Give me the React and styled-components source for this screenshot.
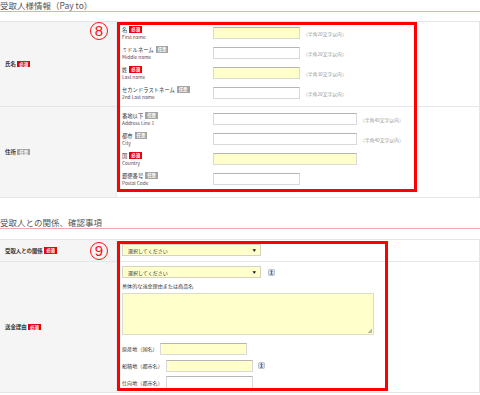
import React from 'react';
import styled, { createGlobalStyle } from 'styled-components';

const GlobalStyle = createGlobalStyle`
  html, body {
    margin: 0;
    padding: 0;
    background: #fff;
  }
  body {
    font-family: "Noto Sans CJK JP", "Noto Sans", sans-serif;
    color: #333;
  }
  * { box-sizing: border-box; }
`;

const Page = styled.div`
  width: 480px;
  height: 395px;
  overflow: hidden;
`;

const SectionTitle = styled.h2`
  margin: ${p => p.$top || 0}px 0 0;
  height: 12px;
  line-height: 11px;
  font-size: 8.5px;
  font-weight: normal;
  color: #555;
  border-bottom: 1px solid #f0a8a8;
`;

const Table = styled.div`
  position: relative;
  margin-top: ${p => p.$top}px;
  border-top: 1px solid #e6e6e6;
  border-right: 1px solid #e6e6e6;
`;

const Row = styled.div`
  display: grid;
  grid-template-columns: 117px 1fr;
  border-bottom: 1px solid #e6e6e6;
`;

const HeadCell = styled.div`
  display: flex;
  align-items: center;
  gap: 1.5px;
  padding-left: 5px;
  background: #f5f5f5;
  border-right: 1px solid #ececec;
  font-size: 5.4px;
  font-weight: bold;
  color: #333;
`;

const BodyCell = styled.div`
  padding: ${p => p.$pad};
`;

const Badge = styled.span`
  display: inline-block;
  height: 6.5px;
  line-height: 6.5px;
  padding: 0 2px;
  font-size: 4.4px;
  font-weight: bold;
  color: #fff;
  background: ${p => (p.$required ? '#e60012' : '#a3a3a3')};
`;

const Field = styled.div`
  display: flex;
  align-items: center;
  height: 20px;
`;

const FieldLabel = styled.div`
  width: 91px;
  flex: none;
`;

const LabelMain = styled.div`
  display: flex;
  align-items: center;
  gap: 2px;
  height: 7px;
  font-size: 5.3px;
  color: #333;
`;

const LabelSub = styled.div`
  height: 7px;
  line-height: 7px;
  font-size: 4.8px;
  color: #554455;
`;

const TextBox = styled.div`
  flex: none;
  width: ${p => p.$w}px;
  height: ${p => p.$h || 12}px;
  margin-left: ${p => p.$ml || 0}px;
  background: ${p => (p.$yellow ? '#ffffcc' : '#fff')};
  border: 1px solid #d9d9d9;
  border-top-color: #b5b5b5;
`;

const Note = styled.span`
  margin-left: 3px;
  font-size: 4.8px;
  color: #999;
`;

const RedFrame = styled.div`
  position: absolute;
  left: 117px;
  top: ${p => p.$top}px;
  width: ${p => p.$w}px;
  height: ${p => p.$h}px;
  border: 3px solid #ff0000;
  pointer-events: none;
`;

const CircleNo = styled.div`
  position: absolute;
  left: 90px;
  top: ${p => p.$top}px;
  width: 18px;
  height: 18px;
  border: 1px solid #ff1010;
  border-radius: 50%;
  color: #ff1010;
  font-family: "Liberation Sans", Arial, sans-serif;
  font-size: 15px;
  line-height: 16px;
  text-align: center;
`;

const Select = styled.div`
  display: flex;
  align-items: center;
  justify-content: space-between;
  width: 139px;
  height: 12px;
  padding: 0 4px 0 5px;
  background: #ffffcc;
  border: 1px solid #d4d4c0;
  font-size: 5px;
  color: #333;
  &::after {
    content: '▼';
    font-size: 3.5px;
    color: #111;
  }
`;

const Line = styled.div`
  display: flex;
  align-items: center;
  height: ${p => p.$h || 12}px;
  margin-top: ${p => p.$mt || 0}px;
`;

const SmallLabel = styled.div`
  margin-top: ${p => p.$mt || 0}px;
  height: 8px;
  line-height: 8px;
  font-size: 5.1px;
  color: #333;
`;

const InlineLabel = styled.span`
  font-size: 5.1px;
  color: #333;
  white-space: nowrap;
`;

const Memo = styled.div`
  position: relative;
  margin-top: 3px;
  width: 252px;
  height: 42px;
  background: #ffffcc;
  border: 1px solid #dcdcc8;
  &::after {
    content: '';
    position: absolute;
    right: 1px;
    bottom: 1px;
    width: 4px;
    height: 4px;
    background: linear-gradient(135deg, transparent 50%, #b8b8a8 50%);
  }
`;

const HelpIcon = ({ ml }) => (
  <svg width="7" height="7" viewBox="0 0 7 7" style={{ marginLeft: ml, flex: 'none' }}>
    <rect x="0.5" y="0.5" width="6" height="6" rx="1" fill="#d8dfea" stroke="#9aa6b8" strokeWidth="0.6" />
    <path d="M3.5 1.6 V5 M2.4 2.6 L3.5 1.6 L4.6 2.6 M2.2 5.3 H4.8" stroke="#2d4a7a" strokeWidth="0.7" fill="none" />
  </svg>
);

const nameFields = [
  { ja: '名', en: 'First name', req: true, note: '（半角20文字以内）' },
  { ja: 'ミドルネーム', en: 'Middle name', req: false, note: '（半角20文字以内）' },
  { ja: '姓', en: 'Last name', req: true, note: '（半角30文字以内）' },
  { ja: 'セカンドラストネーム', en: '2nd Last name', req: false, note: '（半角20文字以内）' },
];

const addressFields = [
  { ja: '番地以下', en: 'Address Line 1', req: false, w: 144, note: '（半角40文字以内）' },
  { ja: '都市', en: 'City', req: false, w: 144, note: '（半角40文字以内）' },
  { ja: '国', en: 'Country', req: true, w: 144 },
  { ja: '郵便番号', en: 'Postal Code', req: false, w: 87 },
];

const FormField = ({ ja, en, req, w = 87, note }) => (
  <Field>
    <FieldLabel>
      <LabelMain>
        {ja}
        <Badge $required={req}>{req ? '必須' : '任意'}</Badge>
      </LabelMain>
      <LabelSub>{en}</LabelSub>
    </FieldLabel>
    <TextBox $w={w} $yellow={req} />
    {note && <Note>{note}</Note>}
  </Field>
);

export default function App() {
  return (
    <Page>
      <GlobalStyle />
      <SectionTitle>受取人様情報（Pay to）</SectionTitle>
      <Table $top={9}>
        <Row>
          <HeadCell>
            氏名<Badge $required>必須</Badge>
          </HeadCell>
          <BodyCell $pad="1px 5px 3px">
            {nameFields.map(f => <FormField key={f.en} {...f} />)}
          </BodyCell>
        </Row>
        <Row>
          <HeadCell>
            住所<Badge>任意</Badge>
          </HeadCell>
          <BodyCell $pad="2px 5px 8px">
            {addressFields.map(f => <FormField key={f.en} {...f} />)}
          </BodyCell>
        </Row>
        <CircleNo $top={0}>8</CircleNo>
        <RedFrame $top={0} $w={300} $h={170} />
      </Table>

      <SectionTitle $top={19}>受取人との関係、確認事項</SectionTitle>
      <Table $top={10}>
        <Row>
          <HeadCell>
            受取人との関係<Badge $required>必須</Badge>
          </HeadCell>
          <BodyCell $pad="4px 5px 5px">
            <Select>選択してください</Select>
          </BodyCell>
        </Row>
        <Row>
          <HeadCell>
            送金理由<Badge $required>必須</Badge>
          </HeadCell>
          <BodyCell $pad="4px 5px 1px">
            <Line>
              <Select>選択してください</Select>
              <HelpIcon ml={7} />
            </Line>
            <SmallLabel $mt={4}>具体的な送金理由または商品名</SmallLabel>
            <Memo />
            <Line $h={17} $mt={5}>
              <InlineLabel>原産地（国名）</InlineLabel>
              <TextBox $w={87} $ml={2} $yellow />
            </Line>
            <Line $h={17}>
              <InlineLabel>船積地（都市名）</InlineLabel>
              <TextBox $w={87} $ml={3} $yellow />
              <HelpIcon ml={5} />
            </Line>
            <Line $h={17}>
              <InlineLabel>仕向地（都市名）</InlineLabel>
              <TextBox $w={87} $h={13} $ml={3} />
            </Line>
          </BodyCell>
        </Row>
        <CircleNo $top={2}>9</CircleNo>
        <RedFrame $top={1} $w={271} $h={150} />
      </Table>
    </Page>
  );
}
